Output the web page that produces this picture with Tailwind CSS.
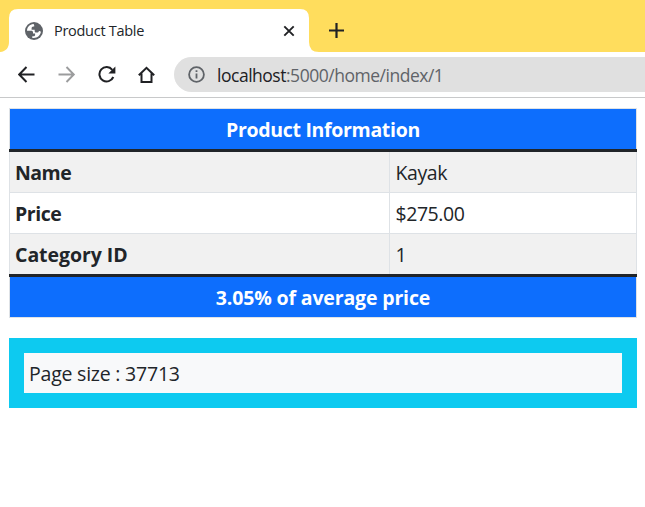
<!DOCTYPE html>
<html lang="en">
<head>
<meta charset="utf-8">
<title>Product Table</title>
<script src="https://cdn.jsdelivr.net/npm/@tailwindcss/browser@4"></script>
</head>
<body class="w-[645px] h-[507px] overflow-hidden bg-white font-['Open_Sans','Noto_Sans',sans-serif] text-[#212529]">
<header>
  <div class="h-[52px] bg-[#ffdd5d] pt-[9px] flex">
    <div class="relative w-[319px] h-[43px] shrink-0">
      <svg class="absolute inset-0" width="319" height="43" viewBox="0 0 319 43" fill="#fff"><path d="M0 43C6 42.500 9 38.500 9 33V9Q9 0 18 0H300Q309 0 309 9V33Q309 43 319 43Z"/></svg>
      <div class="relative h-full flex items-center pl-[25px] pr-[23px]">
        <svg class="shrink-0" width="18" height="18" viewBox="0 0 18 18"><circle cx="9" cy="9" r="9" fill="#5f6368"/><path fill="#fff" d="M8.300 2C4.800 2.300 2 5.200 2 8.700H6.100C7.400 8.700 8 9.300 8 10.300V11.400H10.100V13.100C10.100 14 9.500 14.300 8.300 14.300H7.300V15.900C11.800 16.600 15.300 13.900 15.900 9.800C15.500 9 14.700 8.900 13.900 8.900C13.700 10 13 10.500 12 10.500H11.200C10.300 10.500 9.700 10 9.700 9.200V7.700H6.600V6.400C6.600 5.300 7.300 4.600 8.300 4.600H9.200V3.500C9.200 2.700 8.900 2.200 8.300 2Z"/></svg>
        <span class="ml-[11px] text-[14.500px] leading-5 whitespace-nowrap tracking-[-0.280px]">Product Table</span>
        <svg class="ml-auto mr-[1px]" width="12" height="12" viewBox="0 0 12 12" fill="none" stroke="#202124" stroke-width="1.900"><path d="M1.300 1.300L10.700 10.700M10.700 1.300L1.300 10.700"/></svg>
      </div>
    </div>
    <svg class="ml-[10px] mt-[14px]" width="15" height="15" viewBox="0 0 15 15" fill="none" stroke="#202124" stroke-width="2.200"><path d="M0 7.500H15M7.500 0V15"/></svg>
  </div>
  <div class="h-[46px] border-b border-[#c8c9ca] flex items-center pl-[18px]">
    <svg class="shrink-0" width="18" height="18" viewBox="0 0 18 18" fill="none" stroke="#202124" stroke-width="2"><path d="M16.500 8.500H2M8.500 1L1.200 8.500L8.500 16"/></svg>
    <svg class="ml-[22px] shrink-0" width="18" height="18" viewBox="0 0 18 18" fill="none" stroke="#9b9c9d" stroke-width="1.900"><path d="M.5 8.500H15M8.500 1L15.800 8.500L8.500 16"/></svg>
    <svg class="ml-[22px] shrink-0" width="18" height="18" viewBox="0 0 18 18"><path d="M14.300 3.800A7.200 7.200 0 1 0 15.300 11" fill="none" stroke="#202124" stroke-width="2"/><path d="M17.400 .5V7.500H10.400Z" fill="#202124"/></svg>
    <svg class="ml-[22px] shrink-0" width="18" height="18" viewBox="0 0 18 18" fill="none" stroke="#202124" stroke-width="2"><path d="M.8 9.300L8.500 1.800L16.200 9.300M3.500 7.500V16H13.500V7.500"/></svg>
    <div class="ml-[18px] h-[35px] flex-1 rounded-l-full bg-[#e0e0e0] flex items-center pl-[14px]">
      <svg class="shrink-0" width="17" height="17" viewBox="0 0 17 17"><circle cx="8.500" cy="8.500" r="7.400" fill="none" stroke="#5f6368" stroke-width="1.800"/><path d="M7.600 7.400H9.400V12.600H7.600ZM7.600 4.300H9.400V6.100H7.600Z" fill="#5f6368"/></svg>
      <span class="ml-[12px] text-[17.500px] leading-6 whitespace-nowrap text-[#5f6368] tracking-[-0.480px]"><span class="text-[#202124]">localhost</span>:5000/home/index/1</span>
    </div>
  </div>
</header>
<main class="pt-[10px] pl-[9px] pr-[8px] text-[19.500px] leading-[38px]">
  <table class="w-full table-fixed border-separate border-spacing-0 text-left">
    <colgroup><col class="w-[380px]"><col></colgroup>
    <thead>
      <tr><th colspan="2" class="h-[41px] p-0 pt-[2px] border-t border-x border-[#dee2e6] bg-[#0d6efd] text-white text-center font-bold tracking-[-0.320px]">Product Information</th></tr>
    </thead>
    <tbody>
      <tr><td colspan="2" class="h-[3px] p-0 bg-[#212529]"></td></tr>
      <tr class="bg-[#f1f1f1]"><th class="p-0 pt-[2px] pl-[5px] border-l border-b border-[#dee2e6] font-bold tracking-[-0.550px]">Name</th><td class="p-0 pt-[2px] pl-[5.500px] border-x border-b border-[#dee2e6] tracking-[-0.400px]">Kayak</td></tr>
      <tr><th class="p-0 pt-[2px] pl-[5px] border-l border-b border-[#dee2e6] font-bold tracking-[-0.450px]">Price</th><td class="p-0 pt-[2px] pl-[5.500px] border-x border-b border-[#dee2e6] tracking-[-0.450px]">$275.00</td></tr>
      <tr class="bg-[#f1f1f1]"><th class="p-0 pt-[2px] pl-[5px] border-l border-[#dee2e6] font-bold tracking-[-0.050px]">Category ID</th><td class="p-0 pt-[2px] pl-[5.500px] border-x border-[#dee2e6]">1</td></tr>
      <tr><td colspan="2" class="h-[3px] p-0 bg-[#212529]"></td></tr>
    </tbody>
    <tfoot>
      <tr><th colspan="2" class="h-[41px] p-0 pt-[2px] border-b border-x border-[#dee2e6] bg-[#0d6efd] text-white text-center font-bold tracking-[-0.150px]">3.05% of average price</th></tr>
    </tfoot>
  </table>
  <div class="mt-[20px] bg-[#0dcaf0] p-[15px]">
    <div class="h-[40px] bg-[#f8f9fa] pt-[2px] pl-[5px] tracking-[-0.220px]">Page size : 37713</div>
  </div>
</main>
</body>
</html>
